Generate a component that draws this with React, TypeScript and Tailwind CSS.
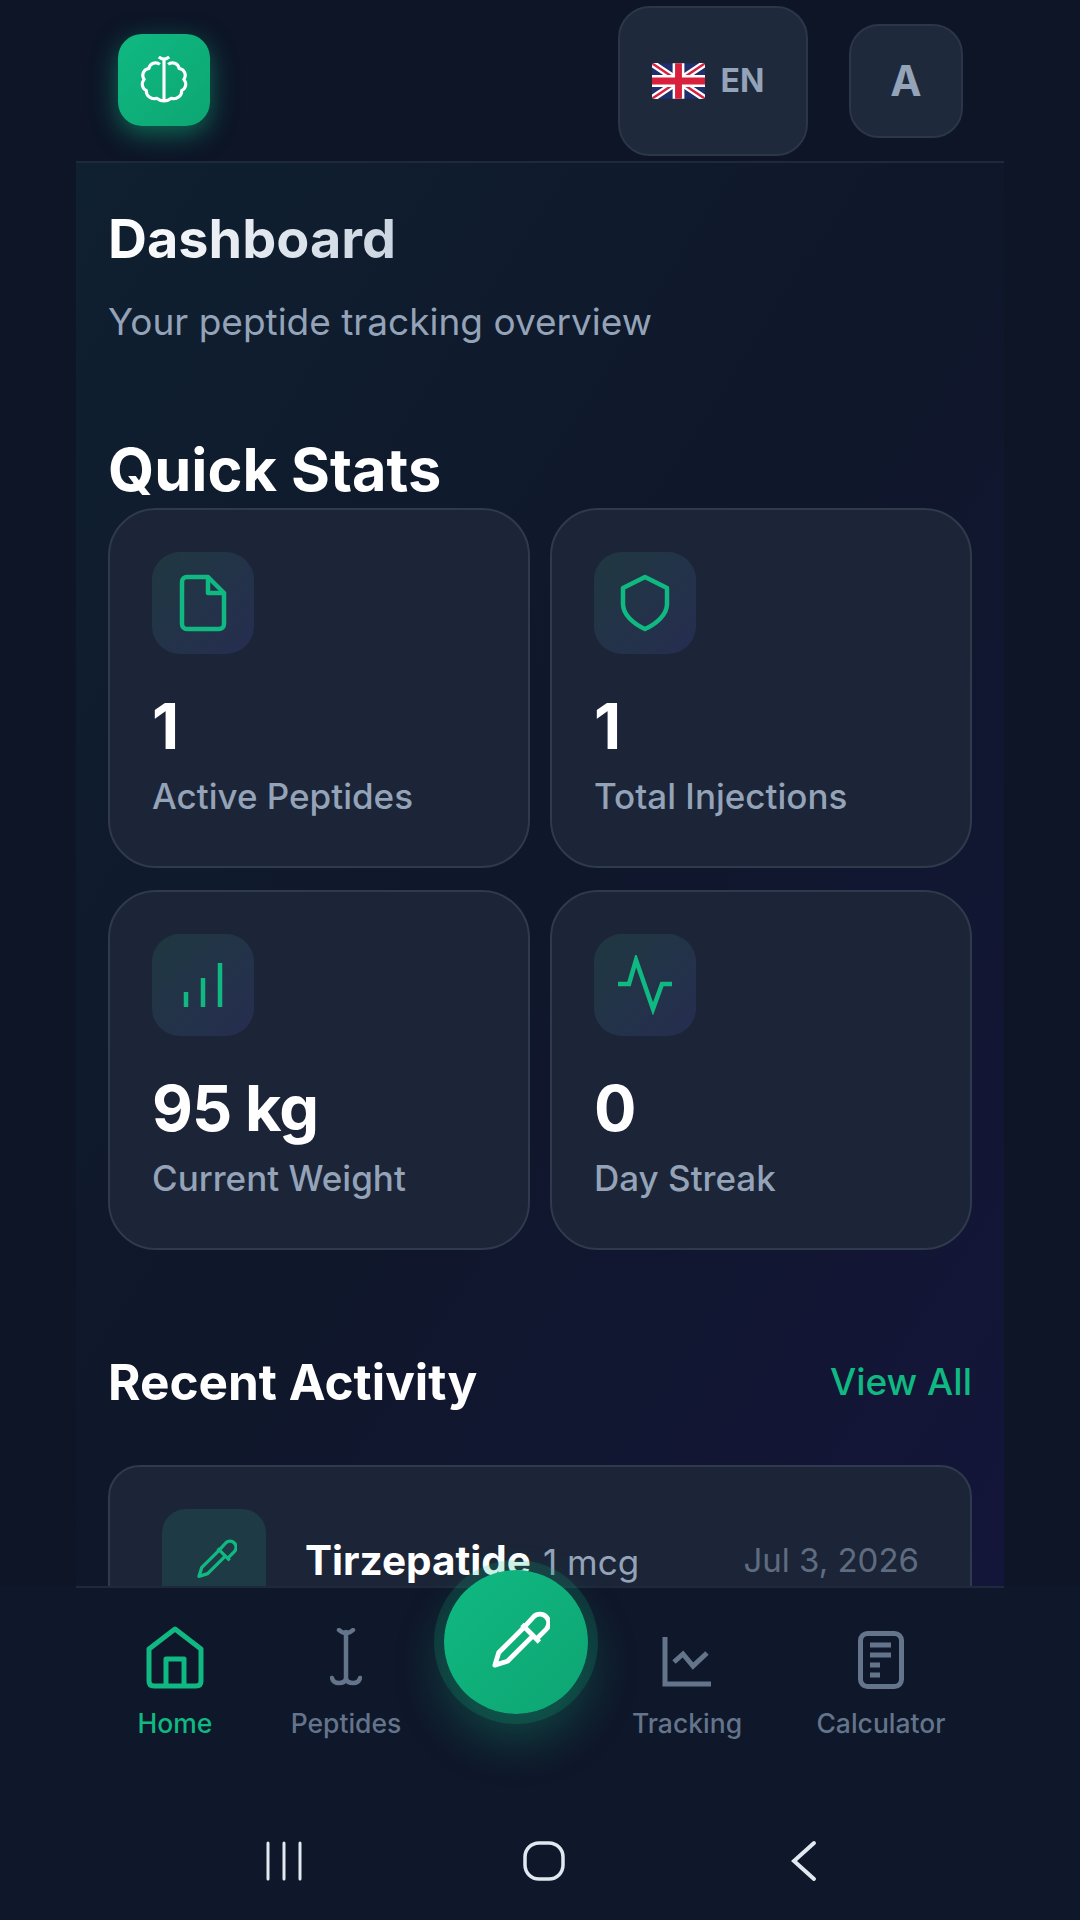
const stats = [
  { value: "1", label: "Active Peptides", icon: <FileIcon /> },
  { value: "1", label: "Total Injections", icon: <ShieldIcon /> },
  { value: "95 kg", label: "Current Weight", icon: <BarsIcon /> },
  { value: "0", label: "Day Streak", icon: <PulseIcon /> },
];

function BrainIcon() {
  return (
    <svg width="50" height="50" viewBox="0 0 48 48" fill="none" stroke="currentColor" strokeWidth="3" strokeLinejoin="round">
      <path d="M24 4V44" />
      <path d="M19 2Q24 6 29 2" />
      <path d="M20 9A6.5 6.5 0 0 0 9.5 13A6.5 6.5 0 0 0 5 23.500A6.500 6.500 0 0 0 7 34A7.500 7.500 0 0 0 17 41.500Q20 44 24 44" />
      <path d="M28 9A6.500 6.500 0 0 1 38.500 13A6.500 6.500 0 0 1 43 23.500A6.500 6.500 0 0 1 41 34A7.500 7.500 0 0 1 31 41.500Q28 44 24 44" />
    </svg>
  );
}

function FileIcon() {
  return (
    <svg width="48" height="58" viewBox="0 0 48 58" fill="none" stroke="currentColor" strokeWidth="4.5" strokeLinejoin="round">
      <path d="M29 3H8a5 5 0 0 0-5 5v42a5 5 0 0 0 5 5h32a5 5 0 0 0 5-5V19Z" />
      <path d="M29 3v16h16" />
    </svg>
  );
}

function ShieldIcon() {
  return (
    <svg width="50" height="58" viewBox="0 0 50 58" fill="none" stroke="currentColor" strokeWidth="4.5" strokeLinejoin="round">
      <path d="M25 3 47 14V30C47 41 36 50 25 55 14 50 3 41 3 30V14Z" />
    </svg>
  );
}

function BarsIcon() {
  return (
    <svg width="40" height="44" viewBox="0 0 40 44" fill="none" stroke="currentColor" strokeWidth="4.5">
      <path d="M3 44V29" />
      <path d="M20 44V15" />
      <path d="M37 44V0" />
    </svg>
  );
}

function PulseIcon() {
  return (
    <svg width="54" height="60" viewBox="0 0 54 60" fill="none" stroke="currentColor" strokeWidth="4.5" strokeMiterlimit="10">
      <path d="M0 29H11L18 5 35 54 44 29H54" />
    </svg>
  );
}

function PenIcon({ size }: { size: number }) {
  return (
    <svg width={size} height={size} viewBox="0 0 60 60" fill="none" stroke="currentColor" strokeWidth="5" strokeLinejoin="round">
      <path d="M33 17 7 43 3 56 16 52 42 26" />
      <path d="M33 17 43 6A9 9 0 0 1 56 19L46 29" />
      <path d="M31 14 49 32" />
    </svg>
  );
}

function UkFlag() {
  return (
    <svg width="53" height="36" viewBox="0 0 54 36" className="rounded-[3px]">
      <rect width="54" height="36" fill="#1f2f6e" />
      <path d="M0 0 54 36M54 0 0 36" stroke="#ffffff" strokeWidth="7" />
      <path d="M0 0 54 36M54 0 0 36" stroke="#d8203c" strokeWidth="2.5" />
      <path d="M27 0v36M0 18h54" stroke="#ffffff" strokeWidth="12" />
      <path d="M27 0v36M0 18h54" stroke="#d8203c" strokeWidth="7" />
    </svg>
  );
}

function HomeIcon() {
  return (
    <svg width="58" height="63" viewBox="0 0 58 63" fill="none" stroke="currentColor" strokeWidth="5" strokeLinejoin="round">
      <path d="M29 3 3 23V55Q3 60 8 60H50Q55 60 55 55V23Z" />
      <path d="M20 60V33H38V60" />
    </svg>
  );
}

function PeptidesIcon() {
  return (
    <svg width="32" height="58" viewBox="0 0 32 58" fill="none" stroke="currentColor" strokeWidth="4.5" strokeLinecap="round">
      <path d="M9 2c2 2 4 3 7 3s5-1 7-3" />
      <path d="M16 4V52" />
      <path d="M2 50c1 4 4 5 7 5 3 0 6-1 7-4 1 3 4 4 7 4 3 0 6-1 7-5" />
    </svg>
  );
}

function TrackingIcon() {
  return (
    <svg width="50" height="50" viewBox="0 0 50 50" fill="none" stroke="currentColor" strokeWidth="5" className="mt-[9px]">
      <path d="M3 0V47H49" />
      <path d="M12 25 21 17 31 29 45 16" />
    </svg>
  );
}

function CalculatorIcon() {
  return (
    <svg width="46" height="58" viewBox="0 0 46 58" fill="none" stroke="currentColor" strokeWidth="5" className="mt-[6px]">
      <rect x="2.5" y="2.5" width="41" height="53" rx="7" />
      <path d="M12 14H33M12 24H33M12 34H22M12 44H22" />
    </svg>
  );
}

function NavItem({ label, icon, active, width }: { label: string; icon: React.ReactNode; active?: boolean; width: string }) {
  return (
    <div className={`${width} shrink-0 flex flex-col items-center ${active ? "text-[#10b981]" : "text-[#64748b]"}`}>
      <div className="h-[66px] flex items-center justify-center">{icon}</div>
      <span className="mt-[18px] text-[26.5px] leading-[30px] font-medium whitespace-nowrap">{label}</span>
    </div>
  );
}

export default function App() {
  return (
    <div className="relative w-[1080px] h-[1920px] overflow-hidden bg-[#0d1527] font-['Inter',sans-serif] flex flex-col">
      {/* header */}
      <div className="mx-[76px] h-[163px] shrink-0 border-b-2 border-[#1e293b] flex items-center">
        <div className="ml-[42px] -mt-[2px] w-[92px] h-[92px] rounded-[24px] bg-gradient-to-br from-[#10b981] to-[#0da673] text-white flex items-center justify-center shadow-[0_8px_26px_rgba(16,185,129,0.5)]">
          <BrainIcon />
        </div>
        <div className="ml-auto mr-[41px] flex items-center gap-[41px]">
          <div className="w-[190px] h-[150px] rounded-[32px] bg-[#1e293b] border-2 border-[#2b3648] flex items-center justify-center gap-[16px] pr-[10px]">
            <UkFlag />
            <span className="text-[32px] font-bold text-[#94a3b8]">EN</span>
          </div>
          <div className="w-[114px] h-[114px] rounded-[30px] bg-[#1e293b] border-2 border-[#2b3648] flex items-center justify-center text-[42px] font-bold text-[#94a3b8]">
            A
          </div>
        </div>
      </div>

      {/* content */}
      <div className="mx-[76px] flex-1 min-h-0 overflow-hidden px-[32px] bg-gradient-to-br from-[#0f2030] via-[#0f172a] to-[#14153a]">
        <h1 className="mt-[44px] text-[54px] leading-[64px] font-bold bg-gradient-to-r from-white to-[#cbd5e1] bg-clip-text text-transparent w-fit">
          Dashboard
        </h1>
        <p className="mt-[29px] text-[37px] leading-[44px] text-[#94a3b8]">Your peptide tracking overview</p>

        <h2 className="mt-[91px] text-[59.5px] leading-[68px] font-bold text-white">Quick Stats</h2>
        <div className="mt-[5px] grid grid-cols-2 gap-x-[20px] gap-y-[22px]">
          {stats.map((s) => (
            <div key={s.label} className="h-[360px] rounded-[48px] bg-[#1b2537] border-2 border-[#2f3a4c] p-[42px]">
              <div className="w-[102px] h-[102px] rounded-[28px] bg-gradient-to-br from-[#1f3840] to-[#262d50] text-[#10b981] flex items-center justify-center">
                {s.icon}
              </div>
              <div className="mt-[36px] text-[63px] leading-[72px] font-bold tracking-[-1px] text-white">{s.value}</div>
              <div className="mt-[14px] text-[35px] leading-[40px] font-medium text-[#94a3b8]">{s.label}</div>
            </div>
          ))}
        </div>

        <div className="mt-[102px] flex items-center justify-between">
          <h2 className="text-[49.5px] leading-[60px] font-bold text-white">Recent Activity</h2>
          <span className="text-[37px] leading-[44px] font-medium text-[#10b981]">View All</span>
        </div>
        <div className="mt-[53px] h-[200px] rounded-[32px] bg-[#1b2537] border-2 border-[#2f3a4c] pl-[52px] pr-[51px] pt-[42px] flex items-start">
          <div className="w-[104px] h-[104px] rounded-[24px] bg-[#1e3a44] text-[#10b981] flex items-center justify-center pl-[6px] pb-[4px]">
            <PenIcon size={40} />
          </div>
          <div className="ml-[39px] mt-[27px] flex items-baseline gap-[12px]">
            <span className="text-[40.5px] leading-[50px] font-bold text-white">Tirzepatide</span>
            <span className="text-[35px] text-[#94a3b8]">1 mcg</span>
          </div>
          <span className="ml-auto mt-[31px] text-[33px] leading-[40px] text-[#5f6c80]">Jul 3, 2026</span>
        </div>
      </div>

      {/* bottom nav */}
      <div className="relative shrink-0 h-[334px] bg-[#0f172a]">
        <div className="mx-[76px] border-t-2 border-[#1e293b] h-[226px] pt-[36px] flex">
          <NavItem width="w-[198px]" label="Home" active icon={<HomeIcon />} />
          <NavItem width="w-[144px]" label="Peptides" icon={<PeptidesIcon />} />
          <div className="w-[197px] shrink-0" />
          <NavItem width="w-[144px]" label="Tracking" icon={<TrackingIcon />} />
          <NavItem width="w-[244px]" label="Calculator" icon={<CalculatorIcon />} />
        </div>
        <div className="flex items-center justify-center pt-[28px] pl-[5px] text-[#e2e8f0]">
          <svg width="38" height="40" viewBox="0 0 38 40" stroke="currentColor" strokeWidth="3" strokeLinecap="round" className="mr-[220px]">
            <path d="M3 2v36M19 2v36M35 2v36" />
          </svg>
          <svg width="42" height="40" viewBox="0 0 42 40" fill="none" stroke="currentColor" strokeWidth="3.5" className="mr-[225px]">
            <rect x="2" y="2" width="38" height="36" rx="14" />
          </svg>
          <svg width="30" height="42" viewBox="0 0 30 42" fill="none" stroke="currentColor" strokeWidth="4" strokeLinecap="round">
            <path d="M24 3 4 21l20 18" />
          </svg>
        </div>
      </div>

      {/* floating action button */}
      <div className="absolute left-[444px] top-[1570px] w-[144px] h-[144px] rounded-full bg-gradient-to-br from-[#10b981] to-[#0ea573] text-white flex items-center justify-center pl-[10px] pb-[5px] shadow-[0_0_0_10px_rgba(16,185,129,0.18),0_24px_50px_rgba(16,185,129,0.3)]">
        <PenIcon size={58} />
      </div>
    </div>
  );
}
